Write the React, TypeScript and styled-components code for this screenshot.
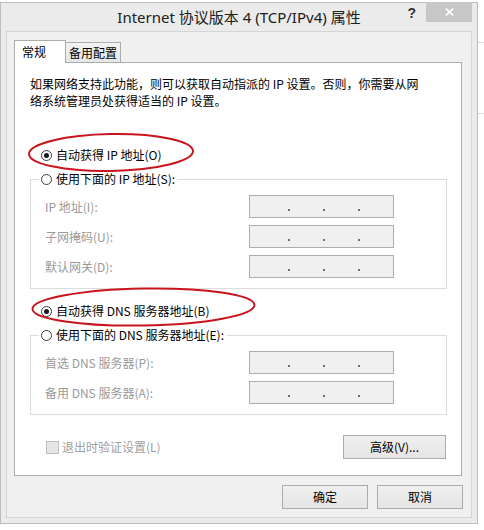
import React from 'react';
import styled, { createGlobalStyle } from 'styled-components';

const FONT = `"Noto Sans CJK SC", "Noto Sans", sans-serif`;

const GlobalStyle = createGlobalStyle`
  html, body { margin: 0; padding: 0; background: #ffffff; }
  body { width: 484px; height: 530px; overflow: hidden; font-family: ${FONT}; }
  * { box-sizing: border-box; }
`;

const Desktop = styled.div`
  position: relative;
  width: 484px;
  height: 530px;
  display: flex;
  align-items: flex-start;
  background: #ffffff;
`;

const Dialog = styled.div`
  width: 478px;
  height: 522px;
  margin-top: 2px;
  flex: none;
  border: 1px solid #bdbdbd;
  background: #ebebeb;
  padding: 0 5px 5px;
  display: flex;
  flex-direction: column;
`;

const TitleBar = styled.div`
  height: 28px;
  flex: none;
  display: grid;
  grid-template-columns: 1fr auto 1fr;
  align-items: start;
`;

const Title = styled.div`
  grid-column: 2;
  margin-top: 4px;
  font-family: "Noto Sans", "Noto Sans CJK SC", sans-serif;
  font-size: 15px;
  line-height: 20px;
  color: #202020;
  white-space: nowrap;
`;

const Controls = styled.div`
  grid-column: 3;
  justify-self: end;
  display: flex;
  align-items: flex-start;
  margin-top: -1px;
`;

const HelpMark = styled.span`
  margin-top: 3px;
  margin-right: 10px;
  font-family: "Liberation Sans", sans-serif;
  font-weight: bold;
  font-size: 14px;
  line-height: 16px;
  color: #333333;
`;

const CloseButton = styled.div`
  width: 46px;
  height: 20px;
  background: #c7c7c7;
  display: flex;
  align-items: center;
  justify-content: center;
`;

const Client = styled.div`
  flex: 1;
  min-height: 0;
  background: #f0f0f0;
  border: 1px solid #d5d5d5;
  padding: 8px 8px 8px 7px;
  display: flex;
  flex-direction: column;
`;

const TabStrip = styled.div`
  height: 23px;
  flex: none;
  display: flex;
  align-items: flex-end;
  margin-bottom: -1px;
  position: relative;
  z-index: 1;
`;

const Tab = styled.div<{ $active?: boolean; $width: number }>`
  width: ${(p) => p.$width}px;
  height: ${(p) => (p.$active ? 23 : 21)}px;
  margin-left: ${(p) => (p.$active ? 0 : -1)}px;
  border: 1px solid #adadad;
  border-bottom: ${(p) => (p.$active ? 'none' : '1px solid #adadad')};
  background: ${(p) => (p.$active ? '#ffffff' : 'linear-gradient(#f2f2f2, #e6e6e6)')};
  padding: 0 ${(p) => (p.$active ? 7 : 3)}px;
  display: flex;
  align-items: center;
  font-size: 12px;
  line-height: 16px;
  color: #000;
  white-space: nowrap;
  position: relative;
  z-index: ${(p) => (p.$active ? 2 : 1)};
`;

const Panel = styled.div`
  flex: 1;
  min-height: 0;
  margin-right: 1px;
  background: #ffffff;
  border: 1px solid #adadad;
  padding: 12px 14px 16px 15px;
  display: flex;
  flex-direction: column;
`;

const Description = styled.p`
  margin: 0;
  font-size: 12px;
  line-height: 17px;
  color: #000;
`;

const RadioRow = styled.label<{ $top: number }>`
  display: flex;
  align-items: center;
  gap: 4px;
  height: 16px;
  margin-top: ${(p) => p.$top}px;
  padding-left: 11px;
  font-size: 12px;
  line-height: 16px;
  color: #000;
  white-space: nowrap;
`;

const RadioCircle = styled.span<{ $checked?: boolean }>`
  width: 11px;
  height: 11px;
  flex: none;
  border: 1px solid #3c3c3c;
  border-radius: 50%;
  background: #fff;
  display: grid;
  place-items: center;
  &::after {
    content: '';
    width: 5px;
    height: 5px;
    border-radius: 50%;
    background: ${(p) => (p.$checked ? '#1a1a1a' : 'transparent')};
  }
`;

const Group = styled.fieldset<{ $top: number }>`
  margin: ${(p) => p.$top}px 0 0;
  min-width: 0;
  border: 1px solid #dcdcdc;
  padding: 8px 0 10px 14px;
`;

const GroupLegend = styled.legend`
  margin-left: -6px;
  padding: 0 3px 0 2px;
  height: 16px;
  display: flex;
  align-items: center;
  gap: 4px;
  font-size: 12px;
  line-height: 16px;
  color: #000;
  white-space: nowrap;
`;

const FieldGrid = styled.div`
  display: grid;
  grid-template-columns: 204px 145px;
  grid-auto-rows: 23px;
  row-gap: 7px;
  align-items: center;
`;

const FieldLabel = styled.span`
  font-size: 12px;
  line-height: 16px;
  color: #9a9a9a;
  white-space: nowrap;
`;

const IpBox = styled.div`
  width: 145px;
  height: 23px;
  border: 1px solid #adadad;
  background: #f0f0f0;
  display: flex;
  align-items: flex-end;
  gap: 33px;
  padding: 0 0 6px 38px;
`;

const IpDot = styled.span`
  width: 2px;
  height: 2px;
  background: #6f6f6f;
`;

const PanelFooter = styled.div`
  margin-top: auto;
  display: flex;
  align-items: center;
  justify-content: space-between;
  padding-left: 16px;
  padding-right: 1px;
`;

const CheckLabel = styled.label`
  display: flex;
  align-items: center;
  gap: 3px;
  font-size: 12px;
  line-height: 16px;
  color: #a0a0a0;
`;

const CheckBox = styled.span`
  width: 13px;
  height: 13px;
  border: 1px solid #bcbcbc;
  background: #e6e6e6;
`;

const Button = styled.button<{ $width: number }>`
  width: ${(p) => p.$width}px;
  height: 24px;
  padding: 0;
  border: 1px solid #acacac;
  border-radius: 0;
  background: linear-gradient(#f0f0f0, #e5e5e5);
  font-family: ${FONT};
  font-size: 12px;
  line-height: 16px;
  color: #000;
`;

const ButtonRow = styled.div`
  flex: none;
  margin-top: 9px;
  display: flex;
  justify-content: flex-end;
  gap: 9px;
`;

const Backdrop = styled.div`
  flex: 1;
  align-self: stretch;
  background: #ffffff;
  display: flex;
  flex-direction: column;
`;

const BackdropRule = styled.div<{ $gap: number }>`
  height: 1px;
  background: #dedede;
  margin-top: ${(p) => p.$gap}px;
`;

const Annotations = styled.svg`
  position: absolute;
  left: 0;
  top: 0;
  pointer-events: none;
`;

const IpInput = () => (
  <IpBox>
    <IpDot />
    <IpDot />
    <IpDot />
  </IpBox>
);

export default function App() {
  return (
    <>
      <GlobalStyle />
      <Desktop>
        <Dialog>
          <TitleBar>
            <Title>Internet 协议版本 4 (TCP/IPv4) 属性</Title>
            <Controls>
              <HelpMark>?</HelpMark>
              <CloseButton>
                <svg width="9" height="8" viewBox="0 0 9 8">
                  <path d="M0.8 0.6 L8.2 7.4 M8.2 0.6 L0.8 7.4" stroke="#ffffff" strokeWidth="1.6" />
                </svg>
              </CloseButton>
            </Controls>
          </TitleBar>
          <Client>
            <TabStrip>
              <Tab $active $width={52}>常规</Tab>
              <Tab $width={56}>备用配置</Tab>
            </TabStrip>
            <Panel>
              <Description>
                如果网络支持此功能，则可以获取自动指派的 IP 设置。否则，你需要从网
                <br />
                络系统管理员处获得适当的 IP 设置。
              </Description>
              <RadioRow $top={38}>
                <RadioCircle $checked />
                自动获得 IP 地址(O)
              </RadioRow>
              <Group $top={8}>
                <GroupLegend>
                  <RadioCircle />
                  使用下面的 IP 地址(S):
                </GroupLegend>
                <FieldGrid>
                  <FieldLabel>IP 地址(I):</FieldLabel>
                  <IpInput />
                  <FieldLabel>子网掩码(U):</FieldLabel>
                  <IpInput />
                  <FieldLabel>默认网关(D):</FieldLabel>
                  <IpInput />
                </FieldGrid>
              </Group>
              <RadioRow $top={14}>
                <RadioCircle $checked />
                自动获得 DNS 服务器地址(B)
              </RadioRow>
              <Group $top={8}>
                <GroupLegend>
                  <RadioCircle />
                  使用下面的 DNS 服务器地址(E):
                </GroupLegend>
                <FieldGrid>
                  <FieldLabel>首选 DNS 服务器(P):</FieldLabel>
                  <IpInput />
                  <FieldLabel>备用 DNS 服务器(A):</FieldLabel>
                  <IpInput />
                </FieldGrid>
              </Group>
              <PanelFooter>
                <CheckLabel>
                  <CheckBox />
                  退出时验证设置(L)
                </CheckLabel>
                <Button $width={103}>高级(V)...</Button>
              </PanelFooter>
            </Panel>
            <ButtonRow>
              <Button $width={86}>确定</Button>
              <Button $width={86}>取消</Button>
            </ButtonRow>
          </Client>
        </Dialog>
        <Backdrop>
          <BackdropRule $gap={42} />
          <BackdropRule $gap={70} />
        </Backdrop>
        <Annotations width="484" height="530" viewBox="0 0 484 530">
          <ellipse cx="111" cy="152.5" rx="82" ry="18.5" fill="none" stroke="#c8141e" strokeWidth="2" transform="rotate(-1 111 152.5)" />
          <ellipse cx="143.5" cy="307" rx="111" ry="18.5" fill="none" stroke="#c8141e" strokeWidth="2" transform="rotate(-1 143.5 307)" />
        </Annotations>
      </Desktop>
    </>
  );
}
